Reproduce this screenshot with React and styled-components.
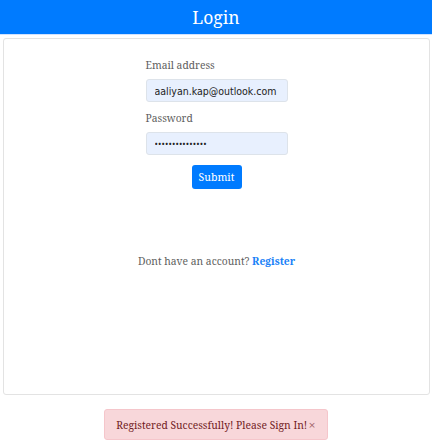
import React from 'react';
import styled, { createGlobalStyle } from 'styled-components';

const GlobalStyle = createGlobalStyle`
  body {
    margin: 0;
    background: #fff;
    font-family: "Noto Serif", "DejaVu Serif", serif;
  }
`;

const Page = styled.div`
  width: 432px;
  height: 448px;
  display: flex;
  flex-direction: column;
  align-items: stretch;
`;

const Header = styled.div`
  height: 34px;
  background: #007bff;
  border-bottom: 1px solid #cfe2ff;
  color: #fff;
  font-size: 17.5px;
  display: flex;
  align-items: center;
  justify-content: center;
`;

const Card = styled.div`
  margin: 3px 2px 0 3px;
  height: 355px;
  border: 1px solid #e3e3e3;
  border-radius: 3px;
  display: flex;
  flex-direction: column;
  align-items: center;
`;

const Form = styled.form`
  width: 142px;
  margin-top: 19px;
  display: flex;
  flex-direction: column;
`;

const Label = styled.label`
  display: block;
  color: #5e5e5e;
  font-size: 10.3px;
  line-height: 15px;
  margin-bottom: 6px;
`;

const Input = styled.input`
  box-sizing: border-box;
  width: 142px;
  height: 23px;
  margin-bottom: 9px;
  padding: 0 8px;
  border: 1px solid #dde3ea;
  border-radius: 3px;
  background: #e8f0fe;
  font-family: ${p =>
    p.$secret ? '"Noto Sans"' : '"DejaVu Sans Condensed", "DejaVu Sans"'}, sans-serif;
  font-size: ${p => (p.$secret ? '9px' : '10.5px')};
  letter-spacing: ${p => (p.$secret ? '0.1px' : '0')};
  color: #222;
  outline: none;
`;

const Submit = styled.button`
  align-self: center;
  width: 50px;
  height: 24px;
  margin-top: 1px;
  padding: 0;
  border: none;
  border-radius: 3px;
  background: #007bff;
  color: #fff;
  font-family: "Noto Serif", "DejaVu Serif", serif;
  font-size: 10.5px;
`;

const Footer = styled.p`
  margin: 65px 0 0;
  color: #5e5e5e;
  font-size: 10.3px;
  line-height: 15px;
`;

const Link = styled.a`
  color: #1a82f7;
  font-weight: bold;
  text-decoration: none;
`;

const Alert = styled.div`
  align-self: center;
  margin-top: 14px;
  height: 31px;
  padding: 0 11px;
  box-sizing: border-box;
  background: #f8d7da;
  border: 1px solid #f5c6cb;
  border-radius: 3px;
  color: #721c24;
  font-size: 10.3px;
  white-space: nowrap;
  display: flex;
  align-items: center;
  justify-content: center;
`;

const Close = styled.span`
  color: #a06068;
  font-family: "DejaVu Sans", sans-serif;
  font-size: 9px;
  margin-left: 1px;
`;

const App = () => {
  return (
    <Page>
      <GlobalStyle />
      <Header>Login</Header>
      <Card>
        <Form onSubmit={e => e.preventDefault()}>
          <Label htmlFor="email">Email address</Label>
          <Input id="email" type="email" defaultValue="aaliyan.kap@outlook.com" />
          <Label htmlFor="password">Password</Label>
          <Input $secret id="password" type="password" defaultValue="123456789012345" />
          <Submit type="submit">Submit</Submit>
        </Form>
        <Footer>
          Dont have an account? <Link href="#">Register</Link>
        </Footer>
      </Card>
      <Alert>
        Registered Successfully! Please Sign In!<Close>×</Close>
      </Alert>
    </Page>
  );
};

export default App;
